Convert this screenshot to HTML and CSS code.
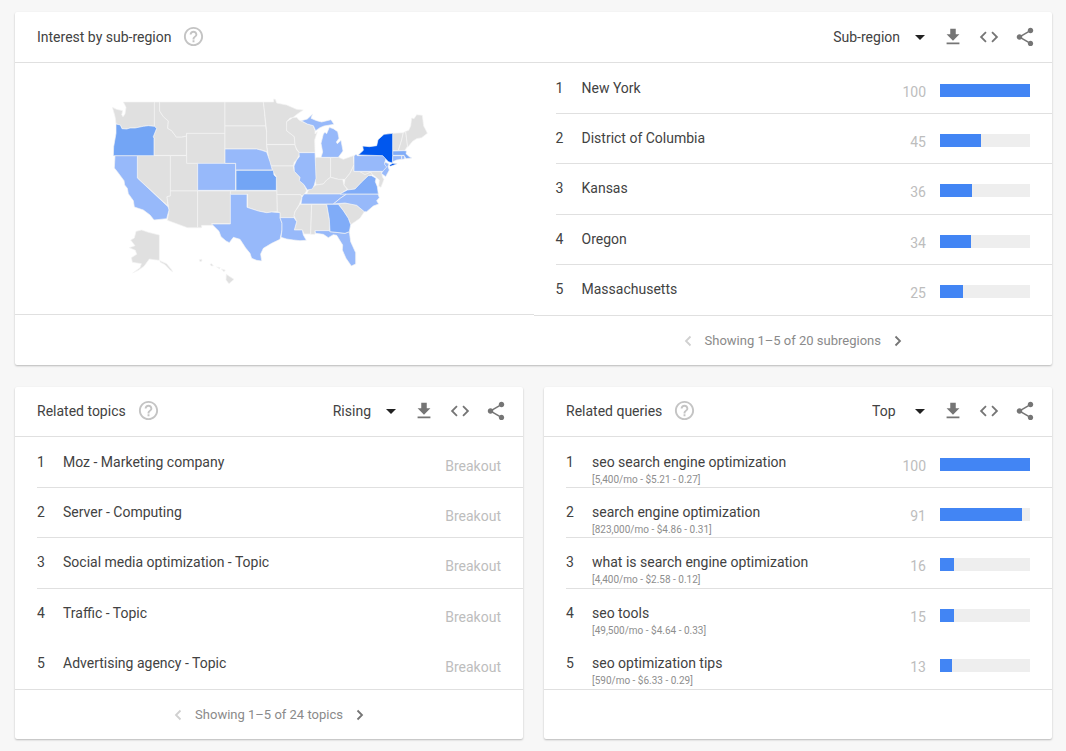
FILE: index.html
```
<!DOCTYPE html>
<html lang="en">

<head>
    <meta charset="utf-8">
    <title>Interest by sub-region</title>
    <link rel="stylesheet" href="styles.css">
</head>

<body>
    <!-- shared icons -->
    <svg class="sprite" aria-hidden="true">
        <symbol id="help" viewBox="0 0 24 24">
            <path d="M11 18h2v-2h-2v2zm1-16C6.48 2 2 6.48 2 12s4.48 10 10 10 10-4.48 10-10S17.52 2 12 2zm0 18c-4.41 0-8-3.59-8-8s3.59-8 8-8 8 3.59 8 8-3.59 8-8 8zm0-14c-2.21 0-4 1.79-4 4h2c0-1.1.9-2 2-2s2 .9 2 2c0 2-3 1.75-3 5h2c0-2.250 3-2.500 3-5 0-2.210-1.790-4-4-4z"/>
        </symbol>
        <symbol id="download" viewBox="0 0 24 24">
            <path d="M19 9h-4V3H9v6H5l7 7 7-7zM5 18v2h14v-2H5z"/>
        </symbol>
        <symbol id="embed" viewBox="0 0 24 24">
            <path d="M9.400 16.600L4.800 12l4.600-4.600L8 6l-6 6 6 6 1.400-1.400zm5.200 0l4.600-4.600-4.600-4.600L16 6l6 6-6 6-1.400-1.400z"/>
        </symbol>
        <symbol id="share" viewBox="0 0 24 24">
            <path d="M18 16.080c-.76 0-1.440.3-1.960.77L8.910 12.700c.05-.23.09-.46.09-.7s-.04-.47-.09-.7l7.050-4.110c.54.5 1.250.81 2.040.81 1.660 0 3-1.340 3-3s-1.340-3-3-3-3 1.340-3 3c0 .24.040.47.090.7L8.040 9.810C7.500 9.310 6.790 9 6 9c-1.660 0-3 1.340-3 3s1.340 3 3 3c.79 0 1.500-.31 2.040-.81l7.120 4.160c-.05.21-.08.43-.08.65 0 1.610 1.310 2.920 2.920 2.920s2.920-1.310 2.920-2.920-1.310-2.920-2.920-2.920z"/>
        </symbol>
        <symbol id="left" viewBox="0 0 18 18">
            <path d="M11.500 4.500L7 9l4.500 4.500" fill="none" stroke="currentColor" stroke-width="1.800"/>
        </symbol>
        <symbol id="right" viewBox="0 0 18 18">
            <path d="M6.500 4.500L11 9l-4.500 4.500" fill="none" stroke="currentColor" stroke-width="1.800"/>
        </symbol>
    </svg>

    <main class="page">
        <section class="card regions">
            <header class="card-header">
                <h2>Interest by sub-region</h2>
                <button class="help" aria-label="Help"><svg><use href="#help"/></svg></button>
                <div class="tools">
                    <label class="picker">
                        <select aria-label="Resolution">
                            <option>Sub-region</option>
                            <option>Metro</option>
                            <option>City</option>
                        </select>
                    </label>
                    <button aria-label="Download"><svg><use href="#download"/></svg></button>
                    <button aria-label="Embed"><svg><use href="#embed"/></svg></button>
                    <button aria-label="Share"><svg><use href="#share"/></svg></button>
                </div>
            </header>
            <div class="columns">
                <div class="map-column">
                    <div class="map-box">
                        <svg class="map" viewBox="0 0 1020 600" role="img" aria-label="Map of the United States">
                            <g class="none">
                                <!-- west -->
                                <path d="M37 52L50 58 68 62 65 74 69 80 75 72 78 52 70 36H163V109L145 107 130 109 105 114 90 114 80 117 66 116 61 105 48 102 46 85 43 72Z"/>
                                <path d="M163 36H179V63L190 80 205 93 203 115 215 122 229 141 245 141 259 138V196H162V145L160 140 170 115 163 109Z"/>
                                <path d="M179 36H375V130H260L259 138 245 141 229 141 215 122 203 115 205 93 190 80 179 63Z"/>
                                <path d="M260 130H375V220H260Z"/>
                                <path d="M112 197H211V318L201 320 204 348 112 264Z"/>
                                <path d="M211 197H260V220H293V303H211Z"/>
                                <path d="M211 303H293V413H262L202 391 207 362 201 320 211 318Z"/>
                                <path d="M293 303H391V401H335L337 406H305V413H293Z"/>
                                <!-- plains -->
                                <path d="M375 36H490L493 60 497 108H375Z"/>
                                <path d="M375 108H497L500 126V165L502 186 485 180 470 177H375Z"/>
                                <path d="M391 303H531L532 365 515 366 500 368 475 363 443 352V313H391Z"/>
                                <path d="M490 36H521V27L526 28 530 39 560 45 590 58 610 60 592 72 578 83 570 84 560 95 561 113 560 122 583 140 585 163H500V126L493 60Z"/>
                                <path d="M500 164H585L590 180 600 190 590 210 583 216 580 228H512L506 205Z"/>
                                <path d="M512 228H580L583 244 600 262 598 272 612 284 620 302 612 315 604 318 602 314H531L529 260 520 247Z"/>
                                <path d="M531 314H602L604 318 606 322 598 343 585 365 582 383H540V368L532 365Z"/>
                                <!-- midwest and south -->
                                <path d="M560 95L578 83 590 82 597 90 622 102 640 107 645 122 645 132 652 125 644 150 645 187H597L590 177 585 165 583 140 560 122Z"/>
                                <path d="M645 205L651 202 692 203V262L680 270 670 282 648 285 646 270Z"/>
                                <path d="M692 203L716 202 730 208 760 197 762 225 750 250 735 268 715 268 692 262Z"/>
                                <path d="M620 312L625 300 648 285 670 282 680 270 692 262 715 268 728 268 732 285 742 298 720 312Z"/>
                                <path d="M735 268L750 250 762 225V245H780L795 252 812 246 818 254 805 257 785 276 765 297 745 300 732 285Z"/>
                                <path d="M780 245H844L848 262 852 268 843 292 836 289 838 270 828 262 818 254 812 246 795 254Z"/>
                                <path d="M600 343H635L632 432H612L607 420H583L590 395 582 377 585 365Z"/>
                                <path d="M635 343H680L688 388V422H645V433H632Z"/>
                                <path d="M715 342L735 339 760 343 770 346 793 365 780 385 752 404 745 385 730 362Z"/>
                                <!-- new england -->
                                <path d="M878 130L910 128 905 150 895 182H878Z"/>
                                <path d="M910 128L917 124 923 168 915 181 895 182 905 150Z"/>
                                <path d="M917 124L926 121 932 108 935 84 942 86 950 74 967 76 971 108 976 117 982 130 965 143 950 146 938 154 923 172Z"/>
                                <!-- alaska and hawaii -->
                                <path d="M108 424L125 420 145 427 178 435V511L160 509 148 507 132 529 115 541 98 549 120 533 124 521 97 517 94 503 110 493 106 481 88 473 105 467 92 450 103 444Z"/>
                                <path d="M180 512L200 521 215 539 218 546 208 538 195 524 180 516Z"/>
                                <path d="M298 509L305 508 306 513 300 515ZM330 523L335 521 340 527 334 528ZM350 531L361 533 358 536ZM364 537L376 540 372 545ZM379 553L402 568 387 581 378 570Z"/>
                            </g>
                            <g class="low">
                                <path d="M45 197H112V264L204 350 207 360 200 386 162 390 150 375 130 360 103 351 100 332 85 311 82 295 74 285 72 272 52 245 43 234Z"/>
                                <path d="M293 220H407V301H293Z"/>
                                <path d="M375 177H470L485 181 500 186 510 215 517 240H407V220H375Z"/>
                                <path d="M391 313H441V352L475 363 500 368 515 366 540 368V383L546 400V420L540 448 515 460 490 475 482 492 485 513 470 511 455 505 450 490 437 474 420 448 400 442 388 458 378 453 363 440 357 424 335 402H391Z"/>
                                <path d="M540 383H582L590 395 583 420H607L610 435 619 451 600 452 580 450 560 447 543 442 546 420V400Z"/>
                                <path d="M597 188H645L648 265 643 285 637 297 622 300 612 284 598 272 600 262 583 244 582 228 590 210 598 200Z"/>
                                <path d="M604 92L622 87 638 72 633 85 650 92 665 96 693 89 702 103 672 108 660 113 647 122 640 107 622 102Z"/>
                                <path d="M688 112L700 116 713 125 717 145 709 156 712 161 723 151 729 183 715 202H663L668 186 663 160 670 132 675 127 680 131Z"/>
                                <path d="M762 197L768 193 772 197H848L858 205 854 219 864 230 850 244H762Z"/>
                                <path d="M856 217L867 221 864 230 868 240 857 260 844 250 850 242 860 231 853 222Z"/>
                                <path d="M878 197H905V208L890 210 878 215Z"/>
                                <path d="M905 197H914L914 207 905 208Z"/>
                                <path d="M612 312H740L722 324 700 342H603L606 322Z"/>
                                <path d="M740 312H834L838 323 830 332 836 342 820 348 800 365 793 365 770 346 735 339 700 342 722 324Z"/>
                                <path d="M645 422H688L690 425 735 430 748 425 752 455 767 488 767 522 754 528 738 505 727 480 728 465 710 436 700 434 685 443 670 433 647 430Z"/>
                            </g>
                            <g class="mid">
                                <path d="M720 312L742 300 765 297 785 276 805 257 815 257 828 265 826 275 832 290 835 312Z"/>
                                <path d="M680 343H715L730 362 745 385 752 404 748 425 735 430 690 425 688 388Z"/>
                                <path d="M878 183L912 182 920 183 918 191 928 200 936 204 918 206 912 196H878Z"/>
                            </g>
                            <g class="high">
                                <path d="M48 102L61 105 66 116 80 117 90 114 105 114 130 109 145 107 163 109 170 115 160 140 162 145V197H40L41 170 48 130Z"/>
                                <path d="M408 241H520L522 255 529 262V301H408Z"/>
                            </g>
                            <path class="top" d="M775 195L790 181 788 168 808 170 830 167 834 149 852 133 878 130V197L877 219 865 215 848 197ZM868 226L878 220 892 221 872 229Z"/>
                        </svg>
                    </div>
                </div>
                <div class="list-column">
                    <ol class="list">
                        <li>
                            <span class="rank">1</span>
                            <span class="name">New York</span>
                            <span class="value">100</span>
                            <span class="bar"><span style="width: 100%"></span></span>
                        </li>
                        <li>
                            <span class="rank">2</span>
                            <span class="name">District of Columbia</span>
                            <span class="value">45</span>
                            <span class="bar"><span style="width: 45%"></span></span>
                        </li>
                        <li>
                            <span class="rank">3</span>
                            <span class="name">Kansas</span>
                            <span class="value">36</span>
                            <span class="bar"><span style="width: 36%"></span></span>
                        </li>
                        <li>
                            <span class="rank">4</span>
                            <span class="name">Oregon</span>
                            <span class="value">34</span>
                            <span class="bar"><span style="width: 34%"></span></span>
                        </li>
                        <li>
                            <span class="rank">5</span>
                            <span class="name">Massachusetts</span>
                            <span class="value">25</span>
                            <span class="bar"><span style="width: 25%"></span></span>
                        </li>
                    </ol>
                    <footer class="pager">
                        <button aria-label="Previous" disabled><svg><use href="#left"/></svg></button>
                        <span>Showing 1–5 of 20 subregions</span>
                        <button aria-label="Next"><svg><use href="#right"/></svg></button>
                    </footer>
                </div>
            </div>
        </section>

        <section class="card">
            <header class="card-header">
                <h2>Related topics</h2>
                <button class="help" aria-label="Help"><svg><use href="#help"/></svg></button>
                <div class="tools">
                    <label class="picker">
                        <select aria-label="Sort topics">
                            <option>Rising</option>
                            <option>Top</option>
                        </select>
                    </label>
                    <button aria-label="Download"><svg><use href="#download"/></svg></button>
                    <button aria-label="Embed"><svg><use href="#embed"/></svg></button>
                    <button aria-label="Share"><svg><use href="#share"/></svg></button>
                </div>
            </header>
            <ol class="list related">
                <li>
                    <span class="rank">1</span>
                    <span class="name">Moz - Marketing company</span>
                    <span class="value">Breakout</span>
                </li>
                <li>
                    <span class="rank">2</span>
                    <span class="name">Server - Computing</span>
                    <span class="value">Breakout</span>
                </li>
                <li>
                    <span class="rank">3</span>
                    <span class="name">Social media optimization - Topic</span>
                    <span class="value">Breakout</span>
                </li>
                <li>
                    <span class="rank">4</span>
                    <span class="name">Traffic - Topic</span>
                    <span class="value">Breakout</span>
                </li>
                <li>
                    <span class="rank">5</span>
                    <span class="name">Advertising agency - Topic</span>
                    <span class="value">Breakout</span>
                </li>
            </ol>
            <footer class="pager">
                <button aria-label="Previous" disabled><svg><use href="#left"/></svg></button>
                <span>Showing 1–5 of 24 topics</span>
                <button aria-label="Next"><svg><use href="#right"/></svg></button>
            </footer>
        </section>

        <section class="card">
            <header class="card-header">
                <h2>Related queries</h2>
                <button class="help" aria-label="Help"><svg><use href="#help"/></svg></button>
                <div class="tools">
                    <label class="picker">
                        <select aria-label="Sort queries">
                            <option>Top</option>
                            <option>Rising</option>
                        </select>
                    </label>
                    <button aria-label="Download"><svg><use href="#download"/></svg></button>
                    <button aria-label="Embed"><svg><use href="#embed"/></svg></button>
                    <button aria-label="Share"><svg><use href="#share"/></svg></button>
                </div>
            </header>
            <ol class="list related">
                <li>
                    <span class="rank">1</span>
                    <span class="name">seo search engine optimization <small>[5,400/mo - $5.21 - 0.27]</small></span>
                    <span class="value">100</span>
                    <span class="bar"><span style="width: 100%"></span></span>
                </li>
                <li>
                    <span class="rank">2</span>
                    <span class="name">search engine optimization <small>[823,000/mo - $4.86 - 0.31]</small></span>
                    <span class="value">91</span>
                    <span class="bar"><span style="width: 91%"></span></span>
                </li>
                <li>
                    <span class="rank">3</span>
                    <span class="name">what is search engine optimization <small>[4,400/mo - $2.58 - 0.12]</small></span>
                    <span class="value">16</span>
                    <span class="bar"><span style="width: 16%"></span></span>
                </li>
                <li>
                    <span class="rank">4</span>
                    <span class="name">seo tools <small>[49,500/mo - $4.64 - 0.33]</small></span>
                    <span class="value">15</span>
                    <span class="bar"><span style="width: 15%"></span></span>
                </li>
                <li>
                    <span class="rank">5</span>
                    <span class="name">seo optimization tips <small>[590/mo - $6.33 - 0.29]</small></span>
                    <span class="value">13</span>
                    <span class="bar"><span style="width: 13%"></span></span>
                </li>
            </ol>
            <footer class="pager"></footer>
        </section>
    </main>
</body>

</html>
```

FILE: styles.css
```
* {
    box-sizing: border-box;
}

body {
    margin: 0;
    background-color: #f7f7f7;
    font-family: Roboto, Arial, sans-serif;
    font-size: 14px;
    line-height: 18px;
    color: #424242;
}

.sprite {
    display: none;
}

.page {
    display: grid;
    grid-template-columns: 1fr 1fr;
    gap: 22px 21px;
    padding: 12px 14px 12px 15px;
}

.card {
    background-color: #fff;
    border-radius: 2px;
    box-shadow: 0 1px 2px rgba(0, 0, 0, 0.25);
}

.regions {
    grid-column: 1 / 3;
}

/* header */
.card-header {
    display: flex;
    align-items: center;
    height: 50px;
    padding: 0 9px 2px 22px;
    border-bottom: 1px solid #e0e0e0;
}

.regions .card-header {
    height: 51px;
    padding-bottom: 1px;
}

h2 {
    margin: 0;
    font-size: 14px;
    font-weight: 400;
}

button {
    display: flex;
    justify-content: center;
    align-items: center;
    padding: 0;
    border: none;
    background: none;
    color: #757575;
    cursor: pointer;
}

svg {
    fill: currentColor;
}

.help {
    margin-left: 11px;
    color: #c4c4c4;
}

.help svg {
    width: 23px;
    height: 23px;
}

.tools {
    display: flex;
    align-items: center;
    margin-left: auto;
}

.tools button {
    width: 36px;
    height: 36px;
}

.tools svg {
    width: 22px;
    height: 22px;
}

.picker {
    position: relative;
}

.picker select {
    appearance: none;
    field-sizing: content;
    min-width: 63px;
    padding: 0 35px 0 0;
    border: none;
    background: none;
    font: inherit;
    color: inherit;
}

.picker::after {
    content: "";
    position: absolute;
    top: 7px;
    right: 10px;
    border: 5px solid transparent;
    border-top-color: #212121;
    border-bottom: none;
    pointer-events: none;
}

/* map */
.columns {
    display: grid;
    grid-template-columns: 1fr 1fr;
}

.map-box {
    height: 252px;
    padding: 27px 0 0 85px;
    border-bottom: 1px solid #e0e0e0;
}

.map {
    display: block;
    width: 340px;
    height: 200px;
    stroke: #f5f5f5;
    stroke-width: 2;
    stroke-linejoin: round;
}

.none { fill: #e0e0e0; }
.low { fill: #97b9fa; }
.mid { fill: #80acf8; }
.high { fill: #73a5f5; }
.top { fill: #0057ee; }

/* lists */
.list {
    display: grid;
    grid-auto-rows: 1fr;
    min-height: 252px;
    margin: 0;
    padding: 1px 0 0 22px;
    list-style: none;
}

.list li {
    display: flex;
    align-items: flex-start;
    padding-right: 22px;
    border-bottom: 1px solid #e0e0e0;
}

.list li:last-child,
.related li:nth-child(4) {
    border-bottom-color: transparent;
}

.rank {
    width: 26px;
    padding-top: 15px;
}

.name {
    flex: 1;
    padding-top: 15px;
}

.name small {
    display: block;
    margin-top: 3px;
    font-size: 10px;
    line-height: 12px;
    color: #8e8e8e;
}

.value {
    padding-top: 19px;
    color: #bdbdbd;
}

.bar {
    width: 90px;
    height: 13px;
    margin: 20px 0 0 14px;
    background-color: #eee;
}

.bar span {
    display: block;
    height: 100%;
    background-color: #4285f4;
}

/* pager */
.pager {
    display: flex;
    justify-content: center;
    align-items: center;
    gap: 8px;
    height: 50px;
    border-top: 1px solid #e0e0e0;
    font-size: 13px;
    color: #8a8a8a;
}

.pager svg {
    width: 18px;
    height: 18px;
}

.pager button:disabled {
    color: #d0d0d0;
    cursor: default;
}
```
